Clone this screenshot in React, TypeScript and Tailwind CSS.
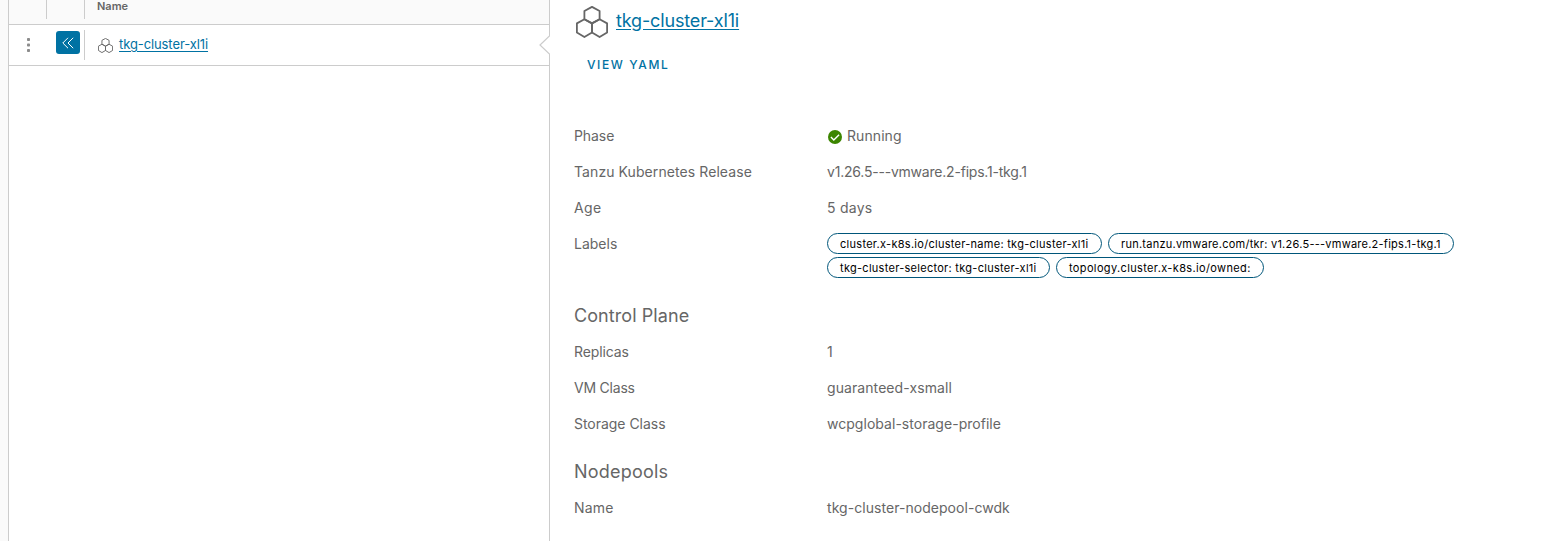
import React from "react";

type Item = { text: string; tracking: string };
type Row = { label: Item; value: Item; status?: boolean };

const overview: Row[] = [
  { label: { text: "Phase", tracking: "tracking-[-0.08px]" }, value: { text: "Running", tracking: "tracking-[0.08px]" }, status: true },
  { label: { text: "Tanzu Kubernetes Release", tracking: "tracking-[0.08px]" }, value: { text: "v1.26.5---vmware.2-fips.1-tkg.1", tracking: "tracking-[-0.21px]" } },
  { label: { text: "Age", tracking: "tracking-[0.4px]" }, value: { text: "5 days", tracking: "tracking-[0.25px]" } },
];

const controlPlane: Row[] = [
  { label: { text: "Replicas", tracking: "tracking-[-0.1px]" }, value: { text: "1", tracking: "tracking-[0px]" } },
  { label: { text: "VM Class", tracking: "tracking-[-0.22px]" }, value: { text: "guaranteed-xsmall", tracking: "tracking-[0.08px]" } },
  { label: { text: "Storage Class", tracking: "tracking-[-0.03px]" }, value: { text: "wcpglobal-storage-profile", tracking: "tracking-[0.03px]" } },
];

const nodepools: Row[] = [
  { label: { text: "Name", tracking: "tracking-[0.2px]" }, value: { text: "tkg-cluster-nodepool-cwdk", tracking: "tracking-[0.05px]" } },
];

const labels = [
  { text: "cluster.x-k8s.io/cluster-name: tkg-cluster-xl1i", style: "w-[275px] tracking-[0.28px]" },
  { text: "run.tanzu.vmware.com/tkr: v1.26.5---vmware.2-fips.1-tkg.1", style: "w-[346px] tracking-[0.25px]" },
  { text: "tkg-cluster-selector: tkg-cluster-xl1i", style: "w-[223px] tracking-[0.28px]" },
  { text: "topology.cluster.x-k8s.io/owned:", style: "w-[208px] tracking-[0.36px]" },
];

function ClusterIcon({ className, stroke }: { className: string; stroke: number }) {
  return (
    <svg viewBox="0 0 32 32" className={className} fill="none" stroke="currentColor" strokeWidth={stroke} strokeLinejoin="round">
      <path d="M16 .9 23.6 5v8.3L16 17.4l-7.6-4.1V5Z" />
      <path d="M8.4 13.3 16 17.4v9.2l-7.6 4.5L.9 26.6v-9.2Z" />
      <path d="M23.6 13.3 16 17.4v9.2l7.6 4.5 7.5-4.5v-9.2Z" />
    </svg>
  );
}

function CheckIcon() {
  return (
    <svg viewBox="0 0 14 14" className="ml-px mr-[5px] mt-px size-[14px] shrink-0">
      <circle cx="7" cy="7" r="7" fill="#3c8500" />
      <path d="m2.9 7.1 2.9 2.9 5.3-5.3" fill="none" stroke="#fff" strokeWidth="1.4" />
    </svg>
  );
}

function DetailRow({ row }: { row: Row }) {
  return (
    <div className="flex h-9 items-center text-sm">
      <div className={`w-[253px] shrink-0 ${row.label.tracking}`}>{row.label.text}</div>
      <div className={`flex items-center ${row.value.tracking}`}>
        {row.status && <CheckIcon />}
        {row.value.text}
      </div>
    </div>
  );
}

export default function App() {
  return (
    <div className="flex h-[541px] w-[1550px] overflow-hidden bg-white font-['Inter','Liberation_Sans',sans-serif] text-[#666]">
      <div className="w-2 shrink-0 bg-[#fafafa]" />
      <section className="w-[542px] shrink-0 border-x border-[#ccc]">
        <header className="flex h-[25px] border-b border-[#ccc] bg-[#fafafa]">
          <div className="h-[19px] w-[38px] border-r border-[#ccc]" />
          <div className="h-[19px] w-[38px] border-r border-[#ccc]" />
          <span className="ml-3 mt-[-2px] text-[11px] font-semibold leading-4">Name</span>
        </header>
        <div className="relative flex h-[41px] border-b border-[#ccc]">
          <div className="flex w-[38px] justify-center pt-[13px]">
            <svg viewBox="0 0 3 14" className="ml-px h-[14px] w-[3px]" fill="#8c8c8c">
              <rect width="3" height="3" rx=".8" />
              <rect y="5.5" width="3" height="3" rx=".8" />
              <rect y="11" width="3" height="3" rx=".8" />
            </svg>
          </div>
          <div className="mt-[5px] h-[30px] w-[38px] border-r border-[#ccc] pl-[9px] pt-px">
            <button className="flex h-[23px] w-6 items-center justify-center rounded-[3px] bg-[#0072a3]">
              <svg viewBox="0 0 12 12" className="size-3" fill="none" stroke="#fff" strokeWidth="1">
                <path d="M6 .8.8 6 6 11.2M11.2.8 6 6l5.2 5.2" />
              </svg>
            </button>
          </div>
          <ClusterIcon className="ml-[13px] mt-[13px] size-[15px]" stroke={2} />
          <a className="ml-[6px] mt-[9px] text-[13px] leading-5 tracking-[-0.1px] text-[#0072a3] underline underline-offset-2">tkg-cluster-xl1i</a>
          <svg viewBox="0 0 11 20" className="absolute right-[-1px] top-[10px] h-5 w-[11px]">
            <path d="M11 .5 1 10l10 9.5" fill="#fff" stroke="#ccc" strokeWidth="1.2" />
          </svg>
        </div>
      </section>
      <main className="flex-1 pl-6">
        <div className="flex h-[50px] pl-[2px]">
          <ClusterIcon className="mt-[6px] size-8" stroke={1.8} />
          <a className="ml-2 mt-[9px] text-[18px] leading-6 tracking-[-0.15px] text-[#0072a3] underline underline-offset-2">tkg-cluster-xl1i</a>
        </div>
        <button className="ml-[13px] block h-[30px] text-xs font-medium tracking-[1.6px] text-[#0072a3]">VIEW YAML</button>
        <div className="mt-[38px]">
          {overview.map((row) => <DetailRow key={row.label.text} row={row} />)}
          <div className="flex h-[54px] text-sm">
            <div className="w-[253px] shrink-0 pt-2">Labels</div>
            <div className="flex w-[640px] flex-wrap content-start gap-x-[6px] gap-y-[3px] pt-[7px]">
              {labels.map((label) => (
                <span key={label.text} className={`flex h-[21px] items-center whitespace-nowrap rounded-full border border-[#00567a] pl-3 pt-[2px] text-[11px] text-black ${label.style}`}>{label.text}</span>
              ))}
            </div>
          </div>
        </div>
        <h2 className="mt-4 h-[38px] text-[18px] leading-[39px] tracking-[0.08px]">Control Plane</h2>
        {controlPlane.map((row) => <DetailRow key={row.label.text} row={row} />)}
        <h2 className="mt-3 h-9 text-[18px] leading-[35px] tracking-[0.22px]">Nodepools</h2>
        {nodepools.map((row) => <DetailRow key={row.label.text} row={row} />)}
      </main>
    </div>
  );
}
